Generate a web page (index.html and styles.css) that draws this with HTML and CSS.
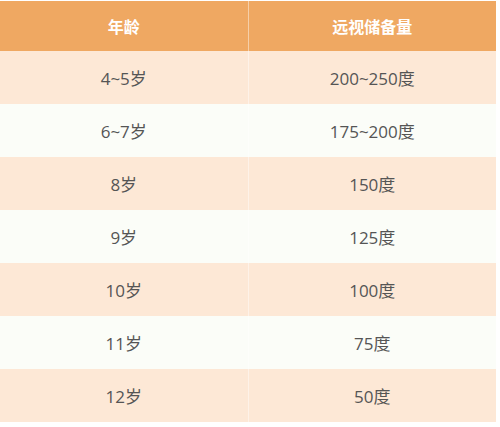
FILE: index.html
```html
<!DOCTYPE html>
<html>
<head>
<meta charset="utf-8">
<link rel="stylesheet" href="styles.css">
</head>
<body>
<table class="tbl">
  <thead>
    <tr><th>年龄</th><th>远视储备量</th></tr>
  </thead>
  <tbody>
    <tr class="odd"><td>4~5岁</td><td>200~250度</td></tr>
    <tr class="even"><td>6~7岁</td><td>175~200度</td></tr>
    <tr class="odd"><td>8岁</td><td>150度</td></tr>
    <tr class="even"><td>9岁</td><td>125度</td></tr>
    <tr class="odd"><td>10岁</td><td>100度</td></tr>
    <tr class="even"><td>11岁</td><td>75度</td></tr>
    <tr class="odd"><td>12岁</td><td>50度</td></tr>
  </tbody>
</table>
</body>
</html>
```

FILE: styles.css
```css
html, body {
  margin: 0;
  padding: 0;
  background: #ffffff;
}
body {
  padding-top: 1px;
  font-family: "Open Sans", "Noto Sans CJK SC", sans-serif;
}
.tbl {
  width: 496px;
  border-collapse: collapse;
  table-layout: fixed;
}
.tbl th, .tbl td {
  text-align: center;
  padding: 0;
  border-left: 1px solid rgba(255, 255, 255, 0.45);
}
.tbl th:first-child, .tbl td:first-child {
  border-left: none;
}
.tbl th {
  height: 50px;
  background: #efa862;
  color: #ffffff;
  font-family: "Noto Sans CJK SC", sans-serif;
  font-weight: bold;
  font-size: 16px;
}
.tbl td {
  height: 53px;
  color: #555555;
  font-size: 17px;
}
.tbl .odd td {
  background: #fde8d6;
}
.tbl .even td {
  background: #fbfdf8;
}
```
